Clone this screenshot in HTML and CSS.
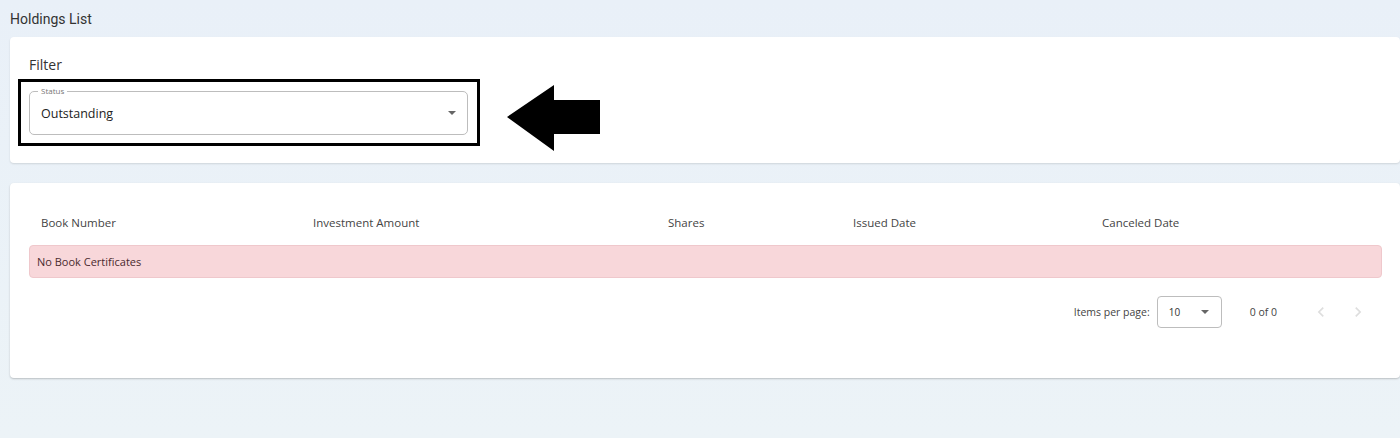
FILE: index.html
```html
<!DOCTYPE html>
<html lang="en">
<head>
<meta charset="utf-8">
<title>Holdings List</title>
<link rel="stylesheet" href="styles.css">
</head>
<body>
<div class="page">
  <h1 class="page-title">Holdings List</h1>

  <section class="card filter-card">
    <h2 class="filter-title">Filter</h2>
    <div class="filter-row">
      <div class="highlight">
        <div class="field">
          <span class="field-label">Status</span>
          <span class="field-value">Outstanding</span>
          <span class="caret"></span>
        </div>
      </div>
      <svg class="arrow" width="94" height="67" viewBox="0 0 94 67" aria-hidden="true">
        <polygon points="0,32 47,0 47,15 93,15 93,49 47,49 47,66" fill="#000"/>
      </svg>
    </div>
  </section>

  <section class="card table-card">
    <div class="table">
      <div class="thead">
        <div class="th">Book Number</div>
        <div class="th">Investment Amount</div>
        <div class="th">Shares</div>
        <div class="th">Issued Date</div>
        <div class="th">Canceled Date</div>
      </div>
      <div class="alert">No Book Certificates</div>
    </div>
    <div class="paginator">
      <span class="pg-label">Items per page:</span>
      <div class="pg-select">
        <span>10</span>
        <span class="caret"></span>
      </div>
      <span class="pg-range">0 of 0</span>
      <div class="pg-nav">
        <svg width="20" height="20" viewBox="0 0 24 24"><path d="M15.4 7.4 14 6l-6 6 6 6 1.4-1.4L10.8 12z" fill="#dedede"/></svg>
        <svg width="20" height="20" viewBox="0 0 24 24"><path d="M10 6 8.6 7.4 13.2 12l-4.6 4.6L10 18l6-6z" fill="#dedede"/></svg>
      </div>
    </div>
  </section>
</div>
</body>
</html>
```

FILE: styles.css
```css
* { box-sizing: border-box; }
html, body { margin: 0; padding: 0; }
body {
  width: 1400px;
  height: 438px;
  overflow: hidden;
  background: linear-gradient(180deg, #e9f0f8 0%, #ecf3f7 100%);
  font-family: "Open Sans", "Noto Sans", sans-serif;
  color: #333;
}
.page {
  padding: 10px 0 0 10px;
}
.page-title {
  margin: 0;
  font-family: Roboto, "Liberation Sans", sans-serif;
  font-weight: 400;
  font-size: 14px;
  line-height: 18px;
  color: #333;
}
.card {
  background: #fff;
  border-radius: 4px;
  box-shadow: 0 1px 2px rgba(0,0,0,0.12);
}
.filter-card {
  margin-top: 9px;
  height: 126px;
  padding: 18px 0 0 8px;
}
.filter-title {
  margin: 0 0 4px 11px;
  font-family: "Open Sans", sans-serif;
  font-weight: 500;
  font-size: 14px;
  line-height: 20px;
  color: #333;
}
.filter-row {
  display: flex;
  align-items: flex-start;
}
.highlight {
  width: 462px;
  height: 67px;
  border: 3px solid #000;
  padding: 9px 9px 0 8px;
}
.field {
  position: relative;
  height: 44px;
  border: 1px solid #bdbdbd;
  border-radius: 5px;
  display: flex;
  align-items: center;
  padding: 0 11px;
}
.field-label {
  position: absolute;
  top: -6px;
  left: 8px;
  padding: 0 3px;
  background: #fff;
  font-size: 8px;
  line-height: 10px;
  color: #777;
}
.field-value {
  flex: 1;
  font-size: 12.5px;
  color: #222;
}
.caret {
  width: 0;
  height: 0;
  border-left: 4px solid transparent;
  border-right: 4px solid transparent;
  border-top: 4px solid #666;
}
.arrow {
  margin: 6px 0 0 27px;
  display: block;
}
.table-card {
  margin-top: 20px;
  height: 195px;
  padding: 28px 18px 0 19px;
  box-shadow: 0 1px 2px rgba(0,0,0,0.22);
}
.thead {
  display: grid;
  grid-template-columns: 272px 355px 185px 249px 1fr;
  height: 34px;
  align-items: start;
  padding-top: 4px;
}
.th {
  padding-left: 12px;
  font-size: 11.5px;
  line-height: 16px;
  color: #444;
}
.alert {
  height: 33px;
  background: #f8d7da;
  border: 1px solid #efc8cc;
  border-radius: 4px;
  padding: 0 7px;
  display: flex;
  align-items: center;
  font-size: 11px;
  color: #4a2a2e;
}
.paginator {
  display: flex;
  align-items: center;
  justify-content: flex-end;
  margin-top: 18px;
  padding-right: 14px;
  height: 32px;
  font-size: 10.5px;
  color: #444;
}
.pg-label { margin-right: 7px; }
.pg-select {
  width: 65px;
  height: 32px;
  border: 1px solid #bdbdbd;
  border-radius: 4px;
  display: flex;
  align-items: center;
  justify-content: space-between;
  padding: 0 12px 0 11px;
  font-size: 10px;
  color: #333;
}
.pg-range { margin-left: 28px; }
.pg-nav {
  display: flex;
  gap: 17px;
  margin-left: 34px;
}
.pg-nav svg { display: block; }
```
